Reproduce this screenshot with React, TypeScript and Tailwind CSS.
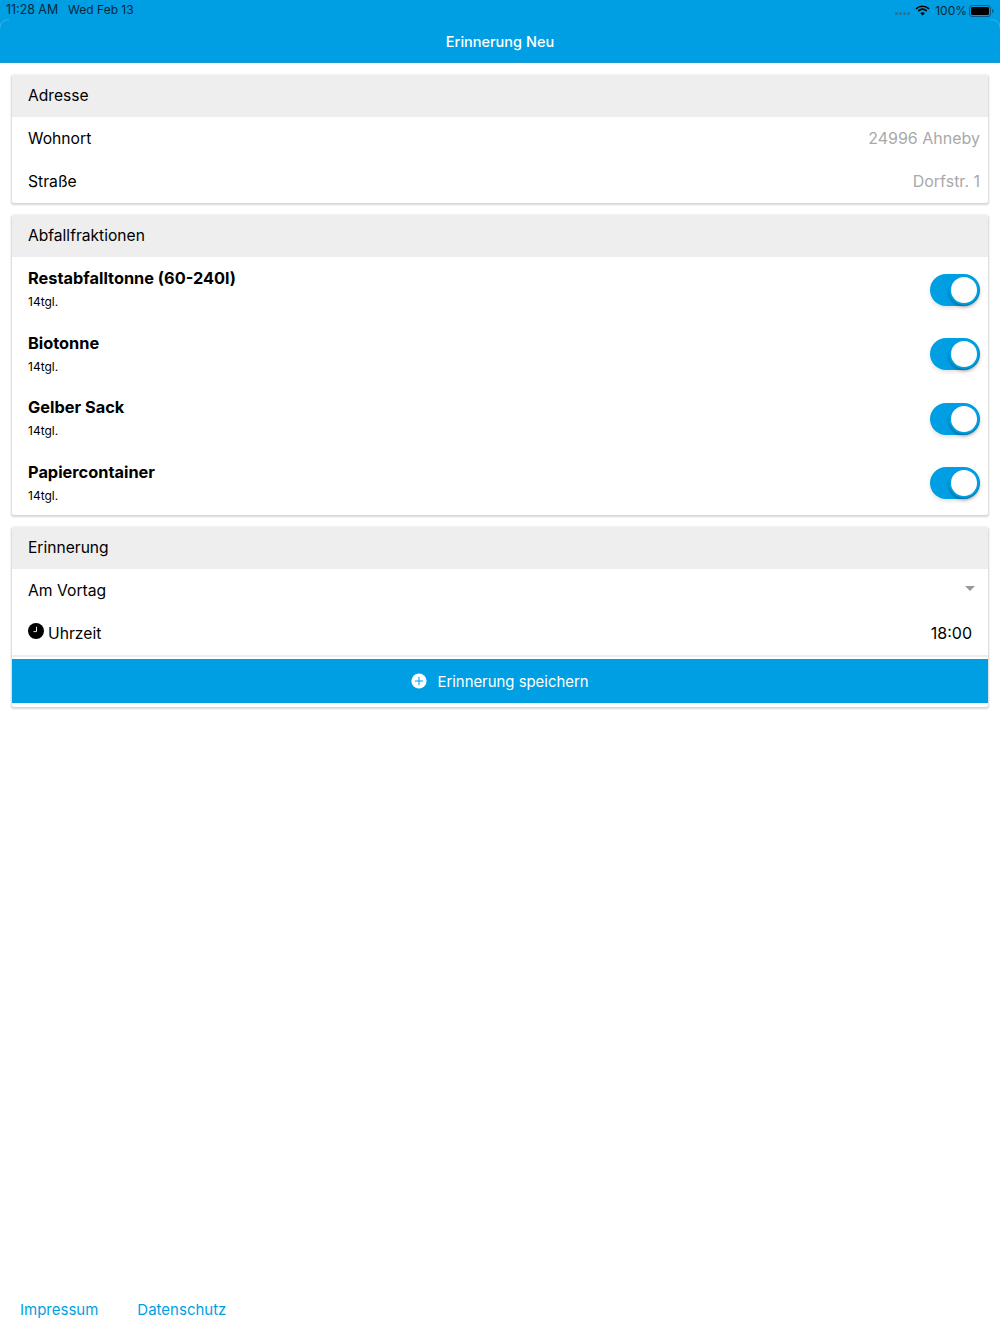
import React from "react";

const cardCls = "mx-3 mt-3 rounded-[2px] bg-white shadow-[0_1px_2px_1px_rgba(0,0,0,0.17)]";

function CardHeader({ title }: { title: string }) {
  return <div className="flex h-[42px] items-center rounded-t-[2px] bg-[#eeeeee] pb-[1px] pl-4 text-[15.6px] text-black">{title}</div>;
}

function Row({ label, value }: { label: string; value: string }) {
  return (
    <div className="flex h-[43px] items-center justify-between pl-4 pr-2">
      <span className="text-[15.7px] text-black">{label}</span>
      <span className="mb-[1px] text-[16px] text-[#a9a9a9]">{value}</span>
    </div>
  );
}

function Toggle() {
  return (
    <div className="relative mt-[1px] h-8 w-[50px] rounded-full bg-[#009fe3] shadow-[0_2px_4px_rgba(0,0,0,0.12)]">
      <div className="absolute right-[1px] top-[1px] h-[30px] w-[30px] rounded-full border-2 border-[#009fe3] bg-white shadow-[0_2px_3px_rgba(0,0,0,0.3)]" />
    </div>
  );
}

function Fraction({ name }: { name: string }) {
  return (
    <div className="flex h-[64.5px] items-center justify-between pl-4 pr-2">
      <div className="mb-[1px] flex flex-col">
        <span className="text-[16.35px] font-bold leading-[24px] text-black">{name}</span>
        <span className="mt-[3px] text-[12px] leading-[18px] text-black">14tgl.</span>
      </div>
      <Toggle />
    </div>
  );
}

function Wifi() {
  return (
    <svg width="15" height="11" viewBox="0 0 15 11" fill="none" stroke="#000" strokeWidth="1.7">
      <path d="M1 3.8C4.8 .4 10.2 .4 14 3.8" />
      <path d="M3.3 6C5.8 3.9 9.2 3.9 11.7 6" />
      <path d="M7.5 10.6 5.2 8.2C6.5 7 8.5 7 9.8 8.2Z" fill="#000" stroke="none" />
    </svg>
  );
}

function Battery() {
  return (
    <svg width="25" height="12" viewBox="0 0 25 12">
      <rect x="0.5" y="0.5" width="21" height="11" rx="2.5" fill="none" stroke="#0a5a86" />
      <rect x="2" y="2" width="18" height="8" rx="1.2" fill="#000" />
      <rect x="23" y="4" width="1.5" height="4" rx="0.7" fill="#0a5a86" />
    </svg>
  );
}

function Clock() {
  return (
    <svg width="16" height="16" viewBox="0 0 16 16">
      <circle cx="8" cy="8" r="8" fill="#000" />
      <path d="M8.5 3.8V8.6H5.4" fill="none" stroke="#fff" strokeWidth="0.9" />
    </svg>
  );
}

function PlusCircle() {
  return (
    <svg width="16" height="16" viewBox="0 0 16 16">
      <circle cx="8" cy="8" r="7.6" fill="#fff" />
      <path d="M8 3.8V12.2M3.8 8H12.2" stroke="#009fe3" strokeWidth="1" />
    </svg>
  );
}

export default function App() {
  return (
    <div className="flex h-[1334px] w-[1000px] flex-col bg-white font-['Inter','Roboto',sans-serif]">
      <header className="relative h-[63px] bg-[#009fe3] shadow-[inset_0_-1px_0_#1a9bd6]">
        <div className="flex h-5 items-center justify-between pl-[6px] pr-[6px] pt-[1px] text-[12px] text-[#06263a]">
          <div className="flex gap-[10px]">
            <span className="text-[12.4px]">11:28 AM</span>
            <span>Wed Feb 13</span>
          </div>
          <div className="flex items-center gap-[5px]">
            <div className="mt-[5px] flex gap-[1px]">
              <span className="h-[3px] w-[3px] rounded-full bg-[#2a6f96]" />
              <span className="h-[3px] w-[3px] rounded-full bg-[#2a6f96]" />
              <span className="h-[3px] w-[3px] rounded-full bg-[#2a6f96]" />
              <span className="h-[3px] w-[3px] rounded-full bg-[#2a6f96]" />
            </div>
            <Wifi />
            <span className="mr-[-3px]">100%</span>
            <Battery />
          </div>
        </div>
        <div className="flex h-[43px] items-center justify-center text-[14.5px] font-medium text-white">Erinnerung Neu</div>
        <svg className="absolute left-0 top-[19px]" width="10" height="10" viewBox="0 0 10 10" fill="none">
          <path d="M0 9C0 4 3 1 9 0.5" stroke="#ffffff" strokeOpacity="0.22" />
        </svg>
        <svg className="absolute right-0 top-[19px]" width="10" height="10" viewBox="0 0 10 10" fill="none">
          <path d="M10 9C10 4 7 1 1 0.5" stroke="#ffffff" strokeOpacity="0.22" />
        </svg>
      </header>

      <section className={cardCls}>
        <CardHeader title="Adresse" />
        <Row label="Wohnort" value="24996 Ahneby" />
        <Row label="Straße" value="Dorfstr. 1" />
      </section>

      <section className={cardCls}>
        <CardHeader title="Abfallfraktionen" />
        <Fraction name="Restabfalltonne (60-240l)" />
        <Fraction name="Biotonne" />
        <Fraction name="Gelber Sack" />
        <Fraction name="Papiercontainer" />
      </section>

      <section className={cardCls + " pb-1"}>
        <CardHeader title="Erinnerung" />
        <div className="flex h-[43px] items-center justify-between pl-4 pr-[13px] text-[15.7px] text-black">
          <span>Am Vortag</span>
          <span className="mb-[4px] h-0 w-0 border-x-[5px] border-t-[5px] border-x-transparent border-t-[#999999]" />
        </div>
        <div className="flex h-[43px] items-center justify-between pl-4 pr-4 text-[15.7px] text-black">
          <span className="flex items-center gap-1">
            <span className="mb-[4px]"><Clock /></span>
            <span>Uhrzeit</span>
          </span>
          <span className="mb-[1px] text-[16px]">18:00</span>
        </div>
        <div className="h-[4px] border-t-2 border-[#eeeeee]" />
        <button className="flex h-[44px] w-full items-center justify-center gap-[10px] bg-[#009fe3] text-[14.9px] text-white">
          <PlusCircle />
          <span className="pt-[2px]">Erinnerung speichern</span>
        </button>
      </section>

      <footer className="mt-auto flex h-[49px] items-start gap-[39px] pl-5 pt-[15px] text-[15px] leading-[20px] text-[#009fe3]">
        <span>Impressum</span>
        <span>Datenschutz</span>
      </footer>
    </div>
  );
}
